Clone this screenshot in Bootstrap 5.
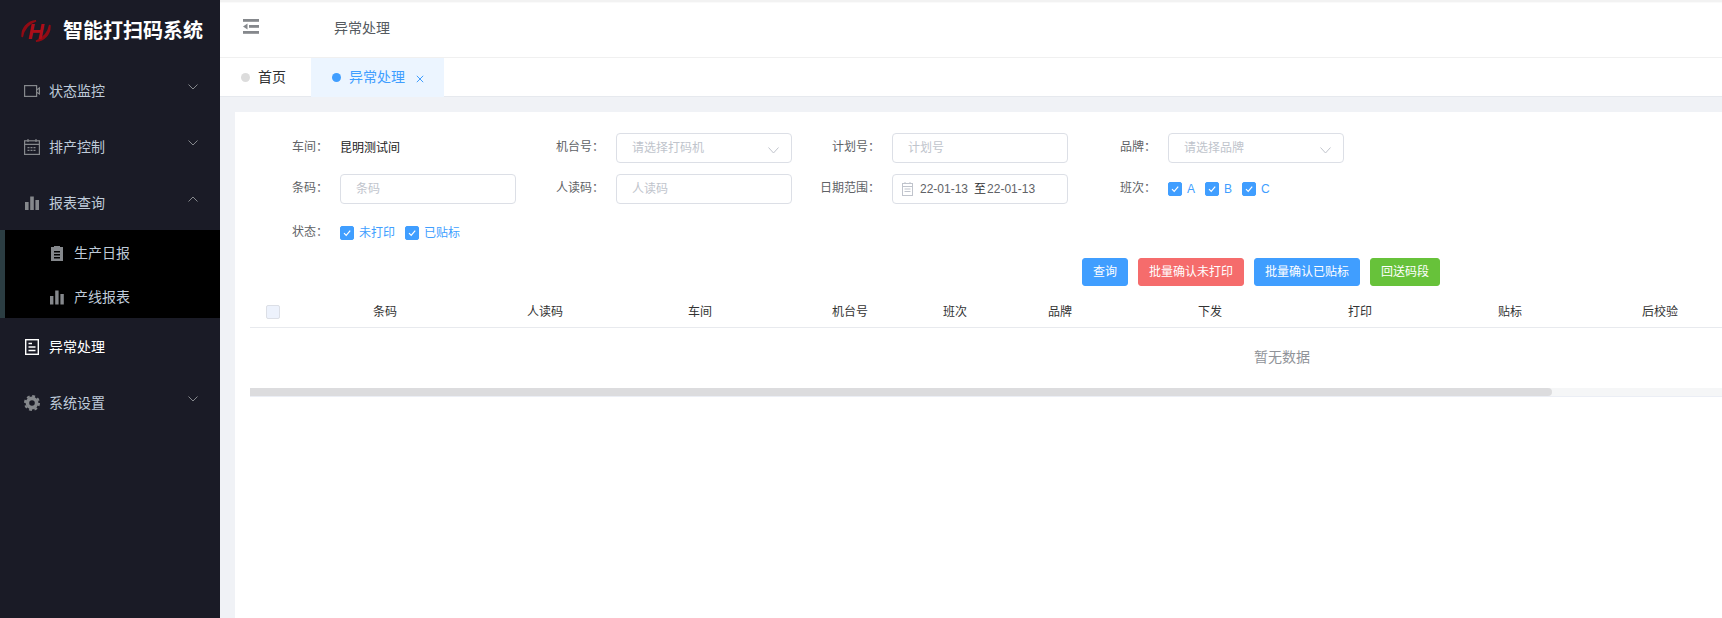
<!DOCTYPE html>
<html lang="zh-CN">
<head>
<meta charset="utf-8">
<title>智能打扫码系统</title>
<link href="https://cdn.jsdelivr.net/npm/bootstrap@5.3.0/dist/css/bootstrap.min.css" rel="stylesheet">
<style>
html,body{height:100%;overflow:hidden}
body{font-family:"Liberation Sans","Noto Sans CJK SC",sans-serif;font-size:12px;color:#606266;background:#fff}
.shell{height:618px}
.side{width:220px;flex:none;background:#1a1b26;color:#bfcbd9}
.brand{height:62px;padding-left:21px;gap:12px;color:#fff;font-size:20px;font-weight:700;letter-spacing:0}
.menu-link{height:56px;padding:2px 22px 0 24px;gap:9px;color:#bfcbd9;font-size:14px}
.menu-link:hover,.menu-link:focus{color:#bfcbd9}
.menu-link.on{color:#fff}
.menu-link svg.mi{width:16px;height:16px;flex:none;color:#85888c;margin-top:-1px}
.menu-link.on svg.mi{color:#fff}
.menu-link .chev{margin-left:auto;width:10px;height:6px;margin-top:-8px;color:#85888c}
.submenu{background:#000;border-left:5px solid #2b3d42}
.sub-link{height:44px;padding:2px 0 0 45px;gap:10px;color:#bfcbd9;font-size:14px}
.sub-link svg{width:14px;height:16px;color:#85888c;flex:none;margin-top:-1px}
.main-col{min-width:0}
.topbar{height:58px;padding-left:23px;border-top:2px solid #f2f2f2;border-bottom:1px solid #f0f0f0;box-shadow:inset 0 1px 1px #fafafa}
.topbar svg{width:16px;height:15px;color:#85888c;margin-top:-7px}
.crumb{margin-left:75px;font-size:14px;color:#555a60;margin-top:-3px}
.tabs-row{height:39px;border-bottom:1px solid #e6e9ee}
.tab-item{height:39px;font-size:14px;color:#303133}
.tab-home{width:91px;padding-left:21px;gap:8px}
.tab-active{width:133px;padding-left:21px;gap:8px;background:#ecf5ff;color:#409eff}
.tab-dot{width:9px;height:9px;border-radius:50%;background:#dcdcdc}
.tab-active .tab-dot{background:#409eff}
.tab-x{width:8px;height:8px;margin-top:2px;margin-left:3px}
.page-wrap{background:#f0f2f6;padding:15px 0 0 15px;min-height:0}
.panel{background:#fff;padding:21px 0 0 15px;overflow:hidden}
.fields{display:grid;grid-template-columns:repeat(4,276px);row-gap:11px}
.field{height:30px}
.field-label{width:90px;flex:none;padding-right:12px;margin-top:-2px;text-align:right;color:#606266;white-space:nowrap}
.field-ctl{width:176px;flex:none}
.val{color:#222}
.ipt{height:30px;padding:0 15px;font-size:12px;border:1px solid #dcdfe6;border-radius:4px;color:#606266;box-shadow:none}
.ipt::placeholder{color:#c0c4cc}
.pick{color:#c0c4cc;padding-right:24px;background-size:11px 7px;background-position:right 12px top 13px;background-image:url("data:image/svg+xml,%3Csvg xmlns='http://www.w3.org/2000/svg' viewBox='0 0 11 7'%3E%3Cpath d='M.5.5 5.5 6 10.500.5' fill='none' stroke='%23c0c4cc'/%3E%3C/svg%3E")}
.date-box{height:30px;border:1px solid #dcdfe6;border-radius:4px;padding-left:9px;color:#606266;white-space:nowrap}
.date-box svg{width:11px;height:14px;color:#c0c4cc;margin-right:7px;flex:none}
.date-sep{margin:0 1px 0 6px;color:#303133}
.checks{gap:10px;color:#409eff}
.checks label{gap:5px;display:flex;align-items:center}
.tick,.tick:checked,.tick:disabled{width:14px;height:14px;margin:0;border:1px solid #409eff;border-radius:2px;background-color:#409eff;opacity:1;box-shadow:none}
.tick:checked{background-size:12px;background-image:url("data:image/svg+xml,%3Csvg xmlns='http://www.w3.org/2000/svg' viewBox='0 0 12 12'%3E%3Cpath d='M3 6.200 5.200 8.400 9.200 3.600' fill='none' stroke='%23fff' stroke-width='1.200'/%3E%3C/svg%3E")}
.tick.blank{background-color:#edf2fc;border-color:#dcdfe6;display:block;margin-left:16px}
.status-row{margin-top:14px;height:30px}
.act-row{width:1190px;gap:10px;margin-top:10px;height:28px}
.act{height:28px;padding:0 10px;font-size:12px;line-height:26px;border-radius:3px;color:#fff;border-width:1px}
.act-blue{background:#409eff;border-color:#409eff}
.act-red{background:#f56c6c;border-color:#f56c6c}
.act-green{background:#67c23a;border-color:#67c23a}
.act:hover,.act:active{color:#fff}
.tbl-wrap{overflow:hidden;margin-top:11px}
.tbl{width:2064px;table-layout:fixed;margin:0;font-size:12px;--bs-table-color:#333;--bs-table-bg:transparent}
.tbl th{font-weight:400;text-align:center;height:30px;padding:1px 0 0;border-bottom:1px solid #e8eaee;vertical-align:middle;color:#333}
.tbl td{height:61px;font-size:14px;color:#909399;text-align:center;vertical-align:middle;padding:0;border:0}
.scroll-track{height:9px;background:#f5f6f7;border-bottom:1px solid #ebeef5}
.scroll-thumb{width:1302px;height:8px;background:#dcdcde;border-radius:0 4px 4px 0}
</style>
</head>
<body>
<div class="shell d-flex">
  <aside class="side d-flex flex-column">
    <div class="brand d-flex align-items-center">
      <svg width="30" height="34" viewBox="0 -6 30 34" aria-hidden="true"><path d="M15 .8C7 1.500 .3 8 1.200 17 2.500 10 7.500 3.500 15 .8z" fill="#8f0b14" stroke="#8f0b14" stroke-width="1.600"/><path d="M15 21.200C23 20.500 29.700 14 28.800 5 27.500 12 22.500 18.500 15 21.200z" fill="#8f0b14" stroke="#8f0b14" stroke-width="1.600"/><text x="15" y="19" text-anchor="middle" font-family="Liberation Sans,sans-serif" font-style="italic" font-weight="700" font-size="22" fill="#ad0d18">H</text></svg>
      <span>智能打扫码系统</span>
    </div>
    <nav class="nav flex-column">
      <a class="nav-link menu-link d-flex align-items-center" href="#">
        <svg class="mi" viewBox="0 0 16 16" fill="none" stroke="currentColor" stroke-width="1.2"><rect x=".6" y="2.600" width="12" height="10.800"/><path d="M12.600 7 15.400 5V11L12.600 9.200"/></svg>
        <span>状态监控</span>
        <svg class="chev" viewBox="0 0 10 6" fill="none" stroke="currentColor"><path d="M.5.5 5 5 9.500.5"/></svg>
      </a>
      <a class="nav-link menu-link d-flex align-items-center" href="#">
        <svg class="mi" viewBox="0 0 16 16" fill="none" stroke="currentColor" stroke-width="1.200"><rect x=".6" y="1.800" width="14.800" height="13.600"/><path d="M.6 5.400H15.400M4 0V3M12 0V3"/><path stroke-dasharray="2 1" d="M3.500 8.700H12.500M3.500 11.300H12.500"/></svg>
        <span>排产控制</span>
        <svg class="chev" viewBox="0 0 10 6" fill="none" stroke="currentColor"><path d="M.5.5 5 5 9.500.5"/></svg>
      </a>
      <a class="nav-link menu-link d-flex align-items-center" href="#">
        <svg class="mi" viewBox="0 0 16 16" fill="currentColor"><rect x="1" y="7" width="3.600" height="8"/><rect x="6.200" y="1.500" width="3.600" height="13.500"/><rect x="11.400" y="5" width="3.600" height="10"/></svg>
        <span>报表查询</span>
        <svg class="chev" viewBox="0 0 10 6" fill="none" stroke="currentColor"><path d="M.5 5.500 5 1 9.500 5.500"/></svg>
      </a>
      <div class="submenu">
        <a class="nav-link sub-link d-flex align-items-center" href="#">
          <svg viewBox="0 0 14 16" fill="currentColor"><path d="M1 2h3V1h6v1h3v14H1zM4 6v1.400h6V6zm0 3v1.400h6V9zm0 3v1.400h6V12z" fill-rule="evenodd"/></svg>
          <span>生产日报</span>
        </a>
        <a class="nav-link sub-link d-flex align-items-center" href="#">
          <svg viewBox="0 0 14 16" fill="currentColor"><rect x="0" y="7" width="3.400" height="8.500"/><rect x="5.200" y="1.500" width="3.400" height="14"/><rect x="10.400" y="5" width="3.400" height="10.500"/></svg>
          <span>产线报表</span>
        </a>
      </div>
      <a class="nav-link menu-link on d-flex align-items-center" href="#">
        <svg class="mi" viewBox="0 0 16 16" fill="none" stroke="currentColor" stroke-width="1.400"><rect x="1.700" y=".7" width="12.600" height="14.600"/><path d="M4.500 4.500H8M4.500 8H11.500M4.500 11.500H11.500"/></svg>
        <span>异常处理</span>
      </a>
      <a class="nav-link menu-link d-flex align-items-center" href="#">
        <svg class="mi" viewBox="0 0 16 16"><circle cx="8" cy="8" r="4.600" fill="none" stroke="currentColor" stroke-width="3.600"/><circle cx="8" cy="8" r="7" fill="none" stroke="currentColor" stroke-width="2" stroke-dasharray="2.900 2.600"/></svg>
        <span>系统设置</span>
        <svg class="chev" viewBox="0 0 10 6" fill="none" stroke="currentColor"><path d="M.5.5 5 5 9.500.5"/></svg>
      </a>
    </nav>
  </aside>
  <div class="main-col flex-grow-1 d-flex flex-column">
    <header class="topbar d-flex align-items-center bg-white">
      <svg viewBox="0 0 16 15" fill="currentColor"><rect x="0" y="0" width="16" height="2.800"/><rect x="6" y="6" width="10" height="2.800"/><path d="M0 7.400 4.500 4.400V10.400z"/><rect x="0" y="12" width="16" height="2.800"/></svg>
      <span class="crumb">异常处理</span>
    </header>
    <div class="tabs-row d-flex bg-white">
      <div class="tab-item tab-home d-flex align-items-center"><span class="tab-dot"></span><span>首页</span></div>
      <div class="tab-item tab-active d-flex align-items-center"><span class="tab-dot"></span><span>异常处理</span>
        <svg class="tab-x" viewBox="0 0 8 8" fill="none" stroke="currentColor"><path d="M.8.8 7.200 7.200M7.200.8 .8 7.200"/></svg></div>
    </div>
    <div class="page-wrap flex-grow-1 d-flex flex-column">
      <section class="panel flex-grow-1">
        <div class="fields">
          <div class="field d-flex align-items-center"><span class="field-label">车间：</span><span class="field-ctl val">昆明测试间</span></div>
          <div class="field d-flex align-items-center"><span class="field-label">机台号：</span><select class="form-select ipt pick field-ctl"><option>请选择打码机</option></select></div>
          <div class="field d-flex align-items-center"><span class="field-label">计划号：</span><input class="form-control ipt field-ctl" placeholder="计划号"></div>
          <div class="field d-flex align-items-center"><span class="field-label">品牌：</span><select class="form-select ipt pick field-ctl"><option>请选择品牌</option></select></div>
          <div class="field d-flex align-items-center"><span class="field-label">条码：</span><input class="form-control ipt field-ctl" placeholder="条码"></div>
          <div class="field d-flex align-items-center"><span class="field-label">人读码：</span><input class="form-control ipt field-ctl" placeholder="人读码"></div>
          <div class="field d-flex align-items-center"><span class="field-label">日期范围：</span>
            <div class="date-box field-ctl d-flex align-items-center">
              <svg viewBox="0 0 11 14" fill="none" stroke="currentColor"><rect x=".5" y="1.500" width="10" height="12"/><path d="M.5 4.500H10.500M3 0V2M8 0V2M2.500 7H8.500M2.500 9.500H8.500"/></svg>
              <span>22-01-13</span><span class="date-sep">至</span><span>22-01-13</span>
            </div>
          </div>
          <div class="field d-flex align-items-center"><span class="field-label">班次：</span>
            <div class="checks d-flex align-items-center">
              <label><input class="form-check-input tick" type="checkbox" checked>A</label>
              <label><input class="form-check-input tick" type="checkbox" checked>B</label>
              <label><input class="form-check-input tick" type="checkbox" checked>C</label>
            </div>
          </div>
        </div>
        <div class="field status-row d-flex align-items-center"><span class="field-label">状态：</span>
          <div class="checks d-flex align-items-center">
            <label><input class="form-check-input tick" type="checkbox" checked>未打印</label>
            <label><input class="form-check-input tick" type="checkbox" checked>已贴标</label>
          </div>
        </div>
        <div class="act-row d-flex justify-content-end">
          <button type="button" class="btn act act-blue">查询</button>
          <button type="button" class="btn act act-red">批量确认未打印</button>
          <button type="button" class="btn act act-blue">批量确认已贴标</button>
          <button type="button" class="btn act act-green">回送码段</button>
        </div>
        <div class="tbl-wrap">
          <table class="table tbl">
            <colgroup><col style="width:55px"><col style="width:160px"><col style="width:160px"><col style="width:150px"><col style="width:150px"><col style="width:60px"><col style="width:150px"><col style="width:150px"><col style="width:150px"><col style="width:150px"><col style="width:150px"><col style="width:579px"></colgroup>
            <thead><tr><th><input class="form-check-input tick blank" type="checkbox" disabled></th><th>条码</th><th>人读码</th><th>车间</th><th>机台号</th><th>班次</th><th>品牌</th><th>下发</th><th>打印</th><th>贴标</th><th>后校验</th><th></th></tr></thead>
            <tbody><tr><td colspan="12">暂无数据</td></tr></tbody>
          </table>
          <div class="scroll-track"><div class="scroll-thumb"></div></div>
        </div>
      </section>
    </div>
  </div>
</div>
<script src="https://cdn.jsdelivr.net/npm/bootstrap@5.3.0/dist/js/bootstrap.bundle.min.js"></script>
</body>
</html>
